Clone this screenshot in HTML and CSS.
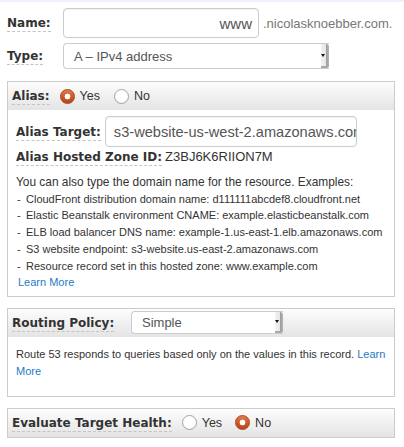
FILE: index.html
```html
<!DOCTYPE html>
<html>
<head>
<meta charset="utf-8">
<title>Record set</title>
<link rel="stylesheet" href="styles.css">
</head>
<body>
<div class="topline"></div>
<div class="page">
  <div class="row row-name">
    <div class="lbl col"><span class="u">Name:</span></div>
    <div class="input name-input">www</div>
    <span class="suffix">.nicolasknoebber.com.</span>
  </div>
  <div class="row row-type">
    <div class="lbl col"><span class="u">Type:</span></div>
    <div class="select type-select"><span class="sel-text">A – IPv4 address</span><span class="arrow"></span></div>
  </div>

  <div class="panel alias">
    <div class="phead">
      <span class="lbl"><span class="u">Alias:</span></span>
      <span class="radio on first"></span><span class="rlabel">Yes</span>
      <span class="radio"></span><span class="rlabel">No</span>
    </div>
    <div class="pbody alias-body">
      <div class="target-row">
        <span class="lbl"><span class="u">Alias Target:</span></span>
        <div class="input target-input">s3-website-us-west-2.amazonaws.com</div>
      </div>
      <div class="zone-row">
        <span class="lbl"><span class="u">Alias Hosted Zone ID:</span></span>
        <span class="zone">Z3BJ6K6RIION7M</span>
      </div>
      <div class="help">
        <div class="intro">You can also type the domain name for the resource. Examples:</div>
        <div class="ex"><span class="dash">-</span>CloudFront distribution domain name: d111111abcdef8.cloudfront.net</div>
        <div class="ex"><span class="dash">-</span>Elastic Beanstalk environment CNAME: example.elasticbeanstalk.com</div>
        <div class="ex"><span class="dash">-</span>ELB load balancer DNS name: example-1.us-east-1.elb.amazonaws.com</div>
        <div class="ex"><span class="dash">-</span>S3 website endpoint: s3-website.us-east-2.amazonaws.com</div>
        <div class="ex"><span class="dash">-</span>Resource record set in this hosted zone: www.example.com</div>
        <div class="more"><a class="link" href="#">Learn More</a></div>
      </div>
    </div>
  </div>

  <div class="panel routing">
    <div class="phead">
      <span class="lbl routing-lbl"><span class="u">Routing Policy:</span></span>
      <div class="select routing-select"><span class="sel-text">Simple</span><span class="arrow"></span></div>
    </div>
    <div class="pbody routing-body">
      Route 53 responds to queries based only on the values in this record. <a class="link" href="#">Learn More</a>
    </div>
  </div>

  <div class="panel health">
    <div class="phead">
      <span class="lbl"><span class="u">Evaluate Target Health:</span></span>
      <span class="radio first"></span><span class="rlabel yes2">Yes</span>
      <span class="radio on"></span><span class="rlabel">No</span>
    </div>
  </div>
</div>
</body>
</html>
```

FILE: styles.css
```css
* { box-sizing: border-box; }

html, body {
  margin: 0;
  padding: 0;
  background: #fff;
}

body {
  font-family: "Liberation Sans", Arial, sans-serif;
  font-size: 12px;
  color: #333;
}

.topline {
  height: 2px;
  background: #eef2fa;
}

.page {
  padding: 6px 9px 0 7px;
}

.row {
  display: flex;
  align-items: center;
}

.row-name { height: 30px; }
.row-type { height: 26px; margin-top: 5px; }

.col { width: 56px; flex: none; }

.lbl {
  font-family: "DejaVu Sans", Verdana, sans-serif;
  font-weight: bold;
  font-size: 12px;
  color: #333;
  white-space: nowrap;
}

.u {
  border-bottom: 1px dashed #c4c4c4;
  padding-bottom: 1px;
}

.input {
  border: 1px solid #ccc;
  border-radius: 4px;
  background: #fff;
  box-shadow: inset 0 1px 1px rgba(0, 0, 0, 0.06);
  font-family: "Liberation Sans", Arial, sans-serif;
  font-size: 14.6px;
  color: #555;
  white-space: nowrap;
  overflow: hidden;
  display: flex;
  align-items: center;
}

.name-input {
  width: 196px;
  height: 30px;
  justify-content: flex-end;
  padding: 0 6px;
  font-size: 15px;
}

.suffix {
  margin-left: 4px;
  font-size: 13px;
  color: #777;
  white-space: nowrap;
}

.select {
  display: flex;
  align-items: stretch;
  border: 1px solid #ccc;
  border-right: none;
  border-radius: 4px 0 0 4px;
  background: #fff;
  font-family: "Liberation Sans", Arial, sans-serif;
  font-size: 13px;
  color: #555;
  overflow: hidden;
}

.sel-text {
  flex: 1;
  display: flex;
  align-items: center;
  white-space: nowrap;
}

.arrow {
  flex: none;
  width: 8px;
  position: relative;
  background: linear-gradient(to right, #f2f2f2 0, #e6e6e6 5px, #9c9c9c 5px, #b5b5b5 8px);
  border-radius: 0 3px 3px 0;
  box-shadow: inset 0 -2px 0 #a8a8a8;
}

.arrow::after {
  content: "";
  position: absolute;
  left: 0;
  top: 10px;
  border-left: 2.5px solid transparent;
  border-right: 2.5px solid transparent;
  border-top: 3px solid #111;
}

.type-select {
  width: 266px;
  height: 26px;
}
.type-select .sel-text { padding-left: 10px; }

.panel {
  border: 1px solid #ccc;
  background: #fff;
}

.phead {
  display: flex;
  align-items: center;
  height: 28px;
  padding: 0 4px;
  background: linear-gradient(#fdfdfd, #e4e4e4);
}

.alias { margin-top: 12px; }

.radio {
  flex: none;
  width: 15px;
  height: 15px;
  border-radius: 50%;
  border: 1px solid #a3a3a3;
  background: radial-gradient(circle at 50% 40%, #fff 0, #fff 55%, #e8e8e8 100%);
  margin-right: 5px;
}

.radio.first { margin-left: 10px; }

.radio.on {
  border: 1px solid #a8451d;
  background:
    radial-gradient(circle, #fff 0, #fff 2.2px, #f1d2c4 2.8px, transparent 3.2px),
    linear-gradient(#e27a4e, #c85526 60%, #b9471c);
}

.rlabel {
  font-family: "Liberation Sans", Arial, sans-serif;
  font-size: 12.5px;
  color: #333;
  margin-right: 14px;
}

.rlabel.yes2 { margin-right: 13px; }

.alias-body {
  padding: 6px 8px 5px 8px;
}

.target-row {
  display: flex;
  align-items: center;
}

.target-input {
  margin-left: 4px;
  width: 252px;
  height: 31px;
  padding: 0 8px;
}

.zone-row {
  margin-top: 1px;
  line-height: 18px;
  height: 18px;
  display: flex;
  align-items: center;
}

.zone {
  margin-left: 3px;
  font-size: 13px;
  color: #333;
}

.help {
  margin-top: 8px;
  line-height: 16.7px;
  font-size: 11px;
  color: #333;
}

.intro { font-size: 11.9px; }

.ex { padding-left: 1px; white-space: nowrap; }

.dash {
  display: inline-block;
  width: 9px;
}

.more { padding-left: 2px; }

.link {
  color: #1e7bc6;
  text-decoration: none;
}

.routing { margin-top: 11px; }

.routing-lbl { width: 119px; flex: none; }

.routing-select {
  width: 152px;
  height: 23px;
}
.routing-select .sel-text { padding-left: 10px; }
.routing-select .arrow::after { top: 8px; }

.routing-body {
  padding: 9px 6px 16px 8px;
  line-height: 17px;
  font-size: 11px;
}

.health { margin-top: 11px; }
```
